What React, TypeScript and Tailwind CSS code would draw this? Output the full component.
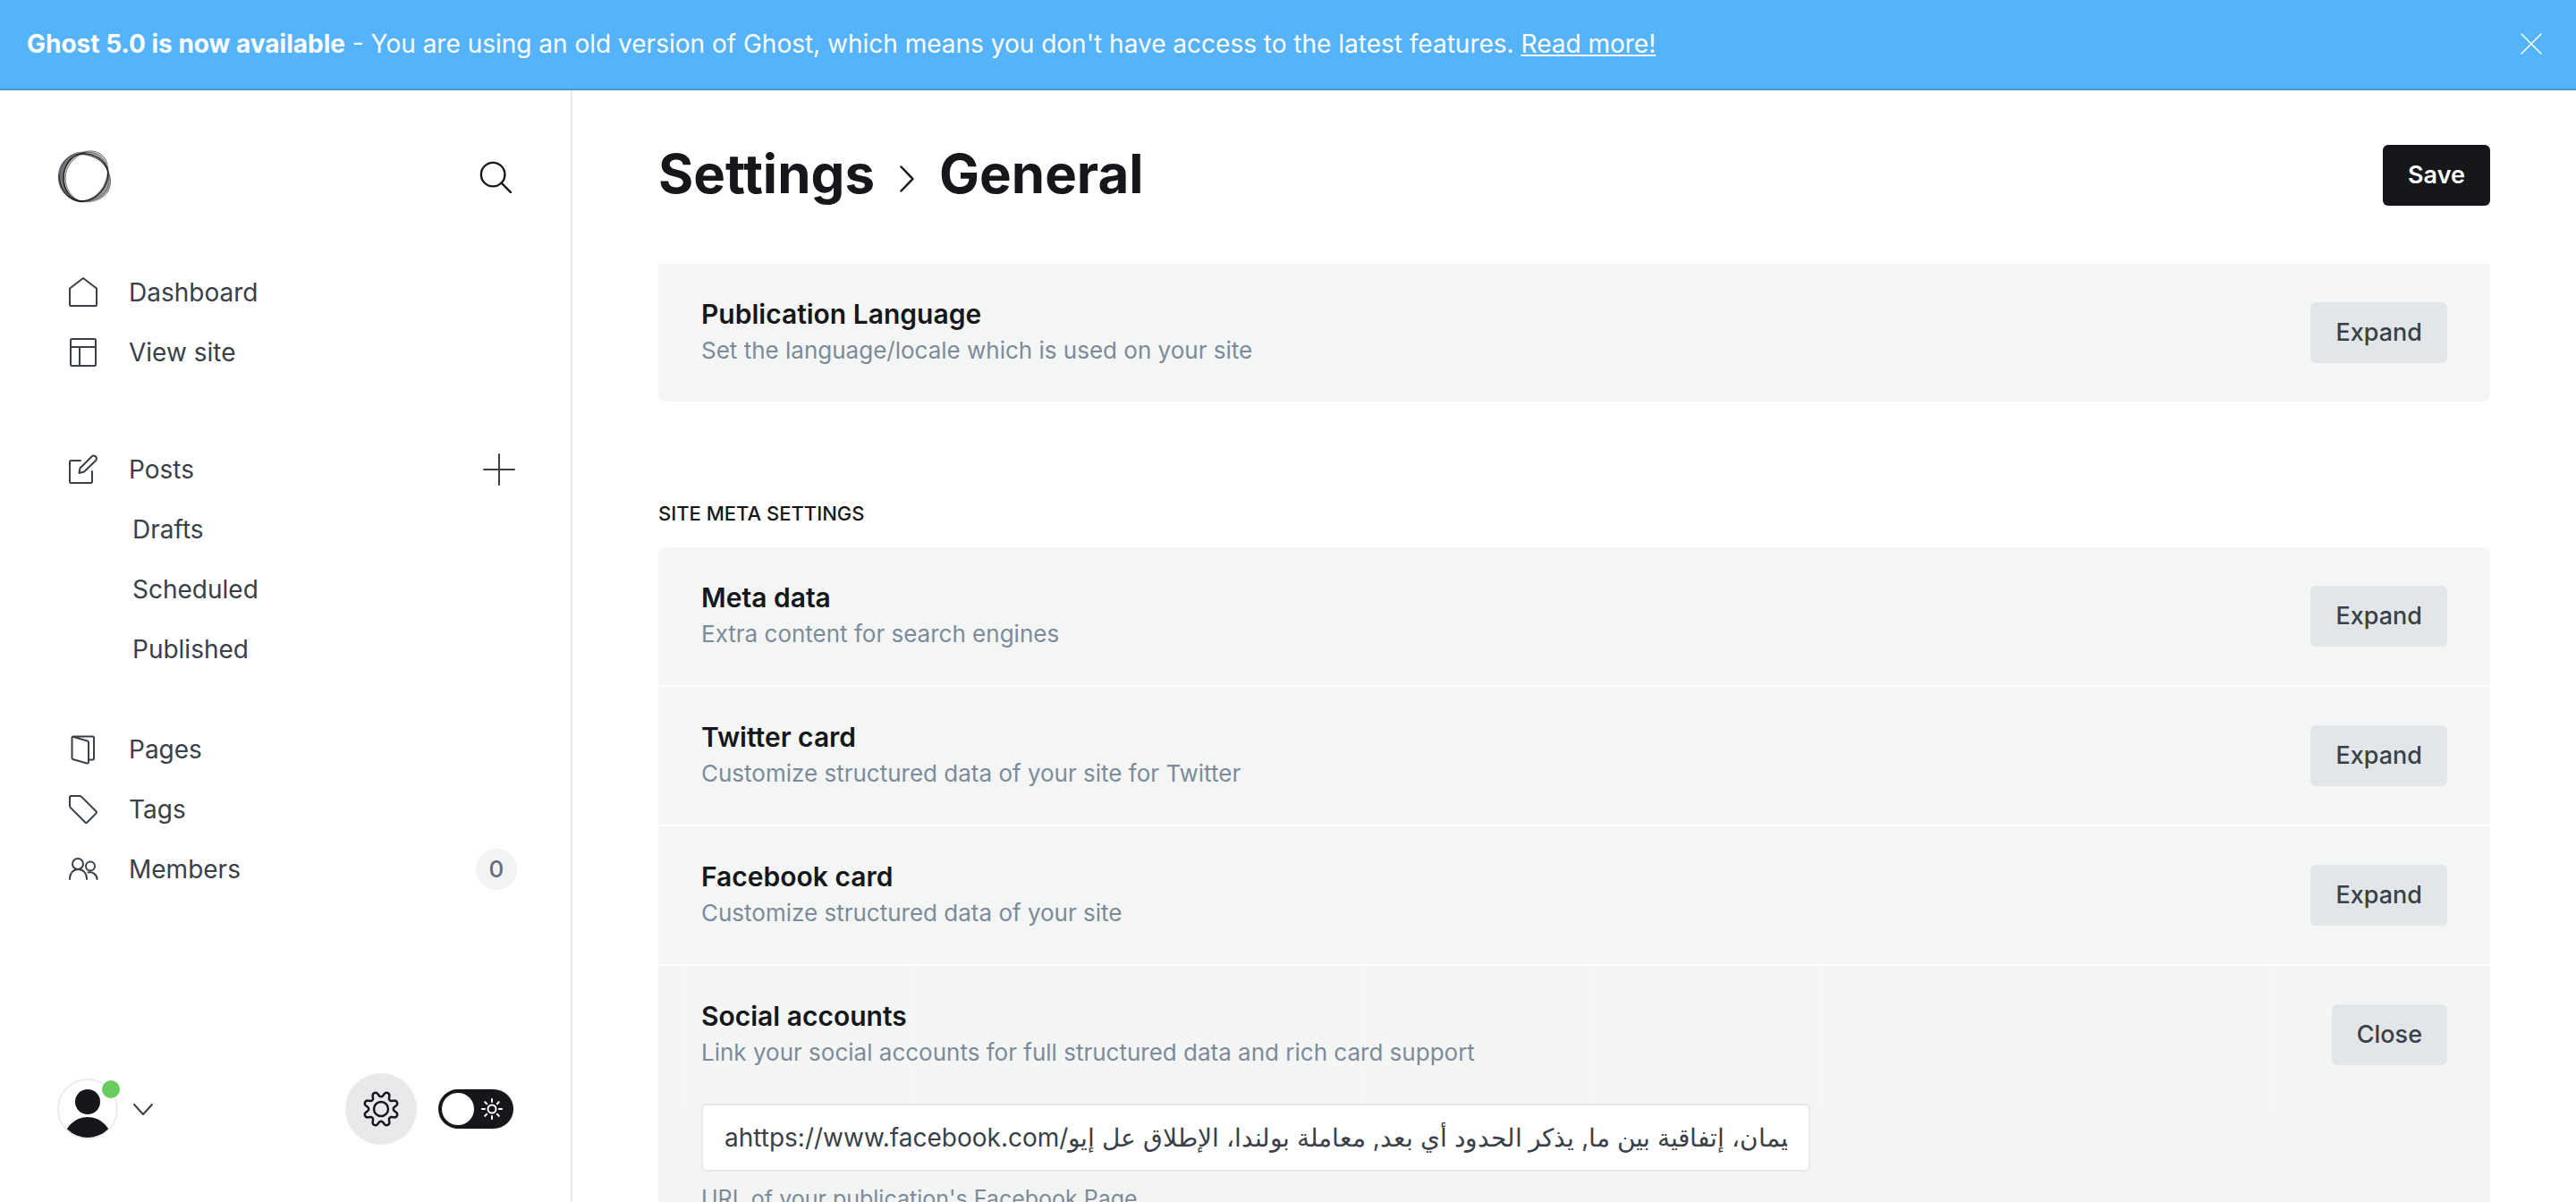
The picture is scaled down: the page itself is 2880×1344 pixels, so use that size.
import React, { useState } from "react";

const nav = "h-[67px] flex items-center text-[28px] text-[#394047]";
const stroke = { fill: "none", stroke: "currentColor", strokeLinecap: "round", strokeLinejoin: "round" } as const;

function HomeIcon() {
  return (
    <svg viewBox="0 0 34 34" className="size-[34px]" {...stroke} strokeWidth={2}>
      <path d="M17 1 32 12.500V30.500a1.500 1.500 0 0 1-1.500 1.500h-27a1.500 1.500 0 0 1-1.500-1.500V12.500Z" />
    </svg>
  );
}
function SiteIcon() {
  return (
    <svg viewBox="0 0 34 34" className="size-[34px]" {...stroke} strokeWidth={2}>
      <rect x="3" y="2" width="28" height="30" rx="1.500" />
      <path d="M3 11h28M13 11v21" />
    </svg>
  );
}
function PostIcon() {
  return (
    <svg viewBox="0 0 34 34" className="size-[34px]" {...stroke} strokeWidth={2}>
      <path d="M14 7H3.500A1.500 1.500 0 0 0 2 8.500v22A1.500 1.500 0 0 0 3.500 32h22a1.500 1.500 0 0 0 1.500-1.500V19" />
      <path d="M18 19.500l-5.500 1.500 1-5.500L26.500 2.500a3.100 3.100 0 0 1 4.500 0 3.100 3.100 0 0 1 0 4.500Z" />
    </svg>
  );
}
function PagesIcon() {
  return (
    <svg viewBox="0 0 34 34" className="size-[34px]" {...stroke} strokeWidth={2}>
      <path d="M23 28.500h4.500a1.500 1.500 0 0 0 1.500-1.500V4a1.500 1.500 0 0 0-1.500-1.500H6A1.500 1.500 0 0 0 4.500 4v22.500a1.500 1.500 0 0 0 1.100 1.500l15.500 4.500A1.500 1.500 0 0 0 23 31V9a1.500 1.500 0 0 0-1.100-1.500L5.500 2.700" />
    </svg>
  );
}
function TagIcon() {
  return (
    <svg viewBox="0 0 34 34" className="size-[34px]" {...stroke} strokeWidth={2}>
      <path d="M3.500 2H13a3 3 0 0 1 2.100.9L31.500 19.300a1.500 1.500 0 0 1 0 2.100L21.400 31.500a1.500 1.500 0 0 1-2.100 0L2.900 15.100A3 3 0 0 1 2 13V3.500A1.500 1.500 0 0 1 3.500 2Z" />
    </svg>
  );
}
function MembersIcon() {
  return (
    <svg viewBox="0 0 34 34" className="size-[34px]" {...stroke} strokeWidth={2}>
      <circle cx="11" cy="11" r="6" />
      <circle cx="25" cy="13.500" r="5" />
      <path d="M2 28v-1a9 9.500 0 0 1 19 0v1M22.500 20.500A8 8 0 0 1 32.500 28" />
    </svg>
  );
}

function Logo() {
  return (
    <svg viewBox="28 35 186 183" className="size-[61px]" fill="none" stroke="#15171a" aria-label="Ghost" role="img">
      <g fill="#15171a" fillRule="evenodd" strokeWidth={2.500} strokeOpacity={0.6}>
        {/* left band */}
        <path fillOpacity={0.45} d="M110 48C62 48 32 84 32 128c0 48 38 85 84 85-42-6-66-42-66-84 0-38 26-72 60-81Z" />
        <path fillOpacity={0.25} d="M124 44C74 36 38 78 36 126c-2 44 30 80 74 86-34-14-54-44-54-80 0-40 28-74 68-88Z" />
        {/* top lens */}
        <path fillOpacity={0.25} d="M108 49C124 36 160 34 182 54c14 14 20 34 19 56C190 80 160 54 108 49Z" />
        <path fillOpacity={0.15} d="M92 52c40-18 84-10 102 32 4 8 6 16 6 26C188 70 146 46 92 52Z" />
        {/* lower right band */}
        <path fillOpacity={0.3} d="M201 106c16 34 10 70-18 90-20 14-48 20-72 15 50 0 92-42 90-105Z" />
        <path fillOpacity={0.2} d="M200 108c14 42 0 84-50 98-12 4-28 6-40 4 50-6 86-48 90-102Z" />
      </g>
      <g strokeWidth={3.500}>
        <path d="M110 48c50-2 82 24 91 60 4 52-40 102-90 102-38-4-62-38-62-78 0-42 24-76 61-84Z" />
        <path strokeOpacity={0.7} d="M34 118c0 54 36 94 84 94" />
      </g>
    </svg>
  );
}

function gearPath() {
  const pts: string[] = [];
  for (let i = 0; i < 240; i++) {
    const t = (i / 240) * Math.PI * 2;
    const w = Math.cos(8 * (t - Math.PI / 8));
    const r = 16.600 + 3.100 * Math.tanh(1.400 * w);
    pts.push(`${(20 + r * Math.cos(t)).toFixed(2)} ${(20 + r * Math.sin(t)).toFixed(2)}`);
  }
  return "M" + pts.join("L") + "Z";
}

function NavItem({ icon, label, children }: { icon: React.ReactNode; label: string; children?: React.ReactNode }) {
  return (
    <li className={nav + " justify-between"}>
      <a href="#" className="flex items-center gap-[34px]">
        {icon}
        {label}
      </a>
      {children}
    </li>
  );
}
function SubItem({ label }: { label: string }) {
  return (
    <li className={nav + " pl-[72px]"}>
      <a href="#">{label}</a>
    </li>
  );
}

function Row({ title, text, open, children }: { title: string; text: string; open?: boolean; children?: React.ReactNode }) {
  return (
    <section className={open ? "bg-linear-to-b from-[#f4f6f6] from-50% to-[#f1f2f2] px-12 py-[43px]" : "bg-[#f4f6f6] px-12 py-[43px]"}>
      <div className="flex items-start justify-between">
        <div>
          <h3 className="text-[30px] leading-[26px] font-semibold text-[#15171a]">{title}</h3>
          <p className="mt-3.5 text-[26px] leading-7 text-[#7c8b9a]">{text}</p>
        </div>
        <button className="h-17 rounded-md bg-[#e2e6e9] px-7 text-[27px] font-medium text-[#394047]">{open ? "Close" : "Expand"}</button>
      </div>
      {children}
    </section>
  );
}

export default function App() {
  const [fb, setFb] = useState("ahttps://www.facebook.com/سليمان، إتفاقية بين ما, يذكر الحدود أي بعد, معاملة بولندا، الإطلاق عل إيو");
  return (
    <div className="flex h-screen flex-col overflow-hidden bg-white font-['Inter','Noto_Sans',sans-serif]">
      <div className="flex h-[101px] shrink-0 items-center justify-between border-b-2 border-[#449ada] bg-[#55b3fa] pr-[38px] pb-[2px] pl-[30px] text-[28px] text-white">
        <p>
          <b className="font-bold">Ghost 5.0 is now available</b> - You are using an old version of Ghost, which means you don't have access to the latest features.{" "}
          <a href="#" className="underline">Read more!</a>
        </p>
        <button aria-label="Close banner">
          <svg viewBox="0 0 24 24" className="size-6" {...stroke} strokeWidth={1.500}>
            <path d="M1 1l22 22M23 1 1 23" />
          </svg>
        </button>
      </div>
      <div className="flex min-h-0 flex-1">
        <aside className="flex w-[640px] shrink-0 flex-col border-r-2 border-[#e6e7e9] pt-[66px] pr-16 pb-16 pl-16">
          <div className="flex items-center justify-between">
            <Logo />
            <button aria-label="Search" className="mr-0.5 text-[#15171a]">
              <svg viewBox="0 0 38 38" className="size-9" {...stroke} strokeWidth={2.500}>
                <circle cx="16" cy="16" r="14" />
                <path d="M26 26l11 11" />
              </svg>
            </button>
          </div>
          <nav className="mt-[65px] -mr-1 flex-1 pl-3">
            <ul>
              <NavItem icon={<HomeIcon />} label="Dashboard" />
              <NavItem icon={<SiteIcon />} label="View site" />
            </ul>
            <ul className="mt-16">
              <NavItem icon={<PostIcon />} label="Posts">
                <button aria-label="New post">
                  <svg viewBox="0 0 40 40" className="size-10" {...stroke} strokeWidth={2}>
                    <path d="M20 3v34M3 20h34" />
                  </svg>
                </button>
              </NavItem>
              <SubItem label="Drafts" />
              <SubItem label="Scheduled" />
              <SubItem label="Published" />
            </ul>
            <ul className="mt-[45px]">
              <NavItem icon={<PagesIcon />} label="Pages" />
              <NavItem icon={<TagIcon />} label="Tags" />
              <NavItem icon={<MembersIcon />} label="Members">
                <span className="flex size-[46px] items-center justify-center rounded-full bg-[#f1f3f4] text-[26px] font-medium text-[#626d79]">0</span>
              </NavItem>
            </ul>
          </nav>
          <div className="flex items-center justify-between">
            <button aria-label="Account" className="relative flex items-center gap-4 text-[#394047]">
              <svg viewBox="0 0 68 68" className="size-17">
                <defs>
                  <clipPath id="avatar"><circle cx="34" cy="34" r="32" /></clipPath>
                </defs>
                <circle cx="34" cy="34" r="33" fill="#fff" stroke="#ebeced" strokeWidth="2" />
                <g clipPath="url(#avatar)" fill="#15171a">
                  <circle cx="34" cy="26" r="14" />
                  <circle cx="34" cy="70" r="27" />
                </g>
              </svg>
              <span className="absolute top-[2px] left-[50px] size-5 rounded-full bg-[#69cb5c]" />
              <svg viewBox="0 0 24 24" className="size-6" {...stroke} strokeWidth={2}>
                <path d="M2 7l10 11L22 7" />
              </svg>
            </button>
            <div className="flex items-center gap-6">
              <button aria-label="Settings" className="flex size-20 items-center justify-center rounded-full bg-[#e8e9eb] text-[#15171a]">
                <svg viewBox="-1 -1 42 42" className="size-[42px]" {...stroke} strokeWidth={2.500}>
                  <path d={gearPath()} />
                  <circle cx="20" cy="20" r="8" />
                </svg>
              </button>
              <button role="switch" aria-checked="false" aria-label="Dark mode" className="flex h-11 w-21 items-center justify-between rounded-full bg-[#15171a] pr-3 pl-1 text-white">
                <span className="size-9 rounded-full bg-white" />
                <svg viewBox="0 0 24 24" className="size-6" {...stroke} strokeWidth={2}>
                  <circle cx="12" cy="12" r="4.500" />
                  <path d="M12 1v3M12 20v3M1 12h3M20 12h3M4.200 4.200l2 2M17.800 17.800l2 2M4.200 19.800l2-2M17.800 6.200l2-2" />
                </svg>
              </button>
            </div>
          </div>
        </aside>
        <main className="min-w-0 flex-1 overflow-hidden px-24">
          <header className="flex h-[194px] items-center justify-between pb-1">
            <h1 className="flex items-center gap-7 pb-1 text-[60px] leading-15 font-bold text-[#15171a]">
              <a href="#">Settings</a>
              <svg viewBox="0 0 16 30" className="mt-3 h-[30px] w-4" {...stroke} strokeWidth={2.500}>
                <path d="M1.500 1.500 14.500 15l-13 13.500" />
              </svg>
              General
            </h1>
            <button className="h-17 rounded-md bg-[#15171a] px-7 text-[27px] font-semibold text-white">Save</button>
          </header>
          <div className="overflow-hidden rounded-b-md">
            <Row title="Publication Language" text="Set the language/locale which is used on your site" />
          </div>
          <h2 className="mt-[113px] mb-[25px] text-[22px] leading-[25px] font-medium text-[#15171a] uppercase">Site meta settings</h2>
          <div className="flex flex-col gap-0.5 overflow-hidden rounded-t-md">
            <Row title="Meta data" text="Extra content for search engines" />
            <Row title="Twitter card" text="Customize structured data of your site for Twitter" />
            <Row title="Facebook card" text="Customize structured data of your site" />
            <Row title="Social accounts" text="Link your social accounts for full structured data and rich card support" open>
              <div className="mt-[43px] max-w-[1240px]">
                <input
                  aria-label="Facebook page URL"
                  value={fb}
                  onChange={(e) => setFb(e.target.value)}
                  className="h-19 w-full rounded-md border-2 border-[#e6e8e9] bg-white px-6 text-[28px] text-[#394047]"
                />
                <p className="mt-3 text-[25px] leading-9 text-[#7c8b9a]">URL of your publication's Facebook Page</p>
              </div>
            </Row>
          </div>
        </main>
      </div>
    </div>
  );
}
